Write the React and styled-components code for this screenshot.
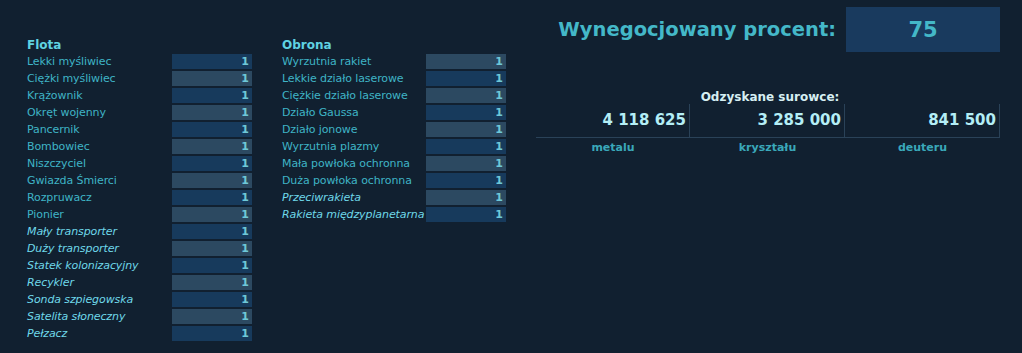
import React from "react";
import styled, { createGlobalStyle } from "styled-components";

const GlobalStyle = createGlobalStyle`
	html, body {
		margin: 0;
		padding: 0;
		background: #112030;
	}
	body {
		font-family: "DejaVu Sans", Verdana, sans-serif;
	}
`;

const Page = styled.div`
	display: flex;
	align-items: flex-start;
	width: 1022px;
	height: 353px;
	box-sizing: border-box;
	padding: 7px 0 0 27px;
	background: #112030;
`;

const Column = styled.div`
	display: flex;
	flex-direction: column;
	width: ${(p) => p.$width}px;
	margin-top: 31px;
	margin-right: 30px;
`;

const Heading = styled.div`
	font-size: 12px;
	font-weight: bold;
	color: #5fd2e2;
	line-height: 15px;
	margin-bottom: 1px;
`;

const Row = styled.div`
	display: flex;
	align-items: center;
	justify-content: space-between;
	height: 15px;
	margin-bottom: 2px;
`;

const Label = styled.span`
	font-size: 11px;
	color: ${(p) => (p.$special ? "#6fd8ea" : "#3fb4c6")};
	font-style: ${(p) => (p.$special ? "italic" : "normal")};
	white-space: nowrap;
	letter-spacing: -0.1px;
`;

const Amount = styled.div`
	width: 80px;
	height: 15px;
	box-sizing: border-box;
	padding-right: 3px;
	text-align: right;
	font-size: 11px;
	font-weight: bold;
	line-height: 15px;
	color: #6ec8d8;
	background: ${(p) => (p.$alt ? "#2c4961" : "#173a5c")};
`;

const Panel = styled.div`
	display: flex;
	flex-direction: column;
	width: 464px;
`;

const PercentRow = styled.div`
	display: flex;
	align-items: center;
	justify-content: flex-end;
	gap: 10px;
`;

const PercentLabel = styled.span`
	font-size: 19.5px;
	font-weight: bold;
	color: #44b8c8;
`;

const PercentBox = styled.div`
	width: 154px;
	height: 45px;
	display: flex;
	align-items: center;
	justify-content: center;
	background: #193a5e;
	font-size: 21px;
	font-weight: bold;
	color: #44b8c8;
`;

const ResTitle = styled.div`
	margin-top: 38px;
	text-align: center;
	font-size: 12px;
	font-weight: bold;
	color: #d6eef2;
	line-height: 14px;
	padding-left: 4px;
`;

const ResGrid = styled.div`
	display: grid;
	grid-template-columns: 154px 155px 155px;
`;

const ResValue = styled.div`
	height: 34px;
	border-bottom: 1px solid #2a4258;
	border-right: 1px solid #2a4258;
	box-sizing: border-box;
	text-align: right;
	padding-right: 3px;
	padding-top: 6px;
	font-size: 15px;
	font-weight: bold;
	color: #b4eef6;
	line-height: 20px;
`;

const ResName = styled.div`
	text-align: center;
	font-size: 11px;
	font-weight: bold;
	color: #3aa8ba;
	padding-top: 3px;
`;

const fleet = [
	["Lekki myśliwiec"],
	["Ciężki myśliwiec"],
	["Krążownik"],
	["Okręt wojenny"],
	["Pancernik"],
	["Bombowiec"],
	["Niszczyciel"],
	["Gwiazda Śmierci"],
	["Rozpruwacz"],
	["Pionier"],
	["Mały transporter", true],
	["Duży transporter", true],
	["Statek kolonizacyjny", true],
	["Recykler", true],
	["Sonda szpiegowska", true],
	["Satelita słoneczny", true],
	["Pełzacz", true],
];

const defence = [
	["Wyrzutnia rakiet"],
	["Lekkie działo laserowe"],
	["Ciężkie działo laserowe"],
	["Działo Gaussa"],
	["Działo jonowe"],
	["Wyrzutnia plazmy"],
	["Mała powłoka ochronna"],
	["Duża powłoka ochronna"],
	["Przeciwrakieta", true],
	["Rakieta międzyplanetarna", true],
];

const resources = [
	["4 118 625", "metalu"],
	["3 285 000", "kryształu"],
	["841 500", "deuteru"],
];

function UnitList({ title, items, altStart, width }) {
	return (
		<Column $width={width}>
			<Heading>{title}</Heading>
			{items.map(([name, special], i) => (
				<Row key={name}>
					<Label $special={special}>{name}</Label>
					<Amount $alt={(i + altStart) % 2 === 1}>1</Amount>
				</Row>
			))}
		</Column>
	);
}

export default function App() {
	return (
		<>
			<GlobalStyle />
			<Page>
				<UnitList title="Flota" items={fleet} altStart={0} width={225} />
				<UnitList title="Obrona" items={defence} altStart={1} width={224} />
				<Panel>
					<PercentRow>
						<PercentLabel>Wynegocjowany procent:</PercentLabel>
						<PercentBox>75</PercentBox>
					</PercentRow>
					<ResTitle>Odzyskane surowce:</ResTitle>
					<ResGrid>
						{resources.map(([v]) => (
							<ResValue key={v}>{v}</ResValue>
						))}
						{resources.map(([v, n]) => (
							<ResName key={n}>{n}</ResName>
						))}
					</ResGrid>
				</Panel>
			</Page>
		</>
	);
}
